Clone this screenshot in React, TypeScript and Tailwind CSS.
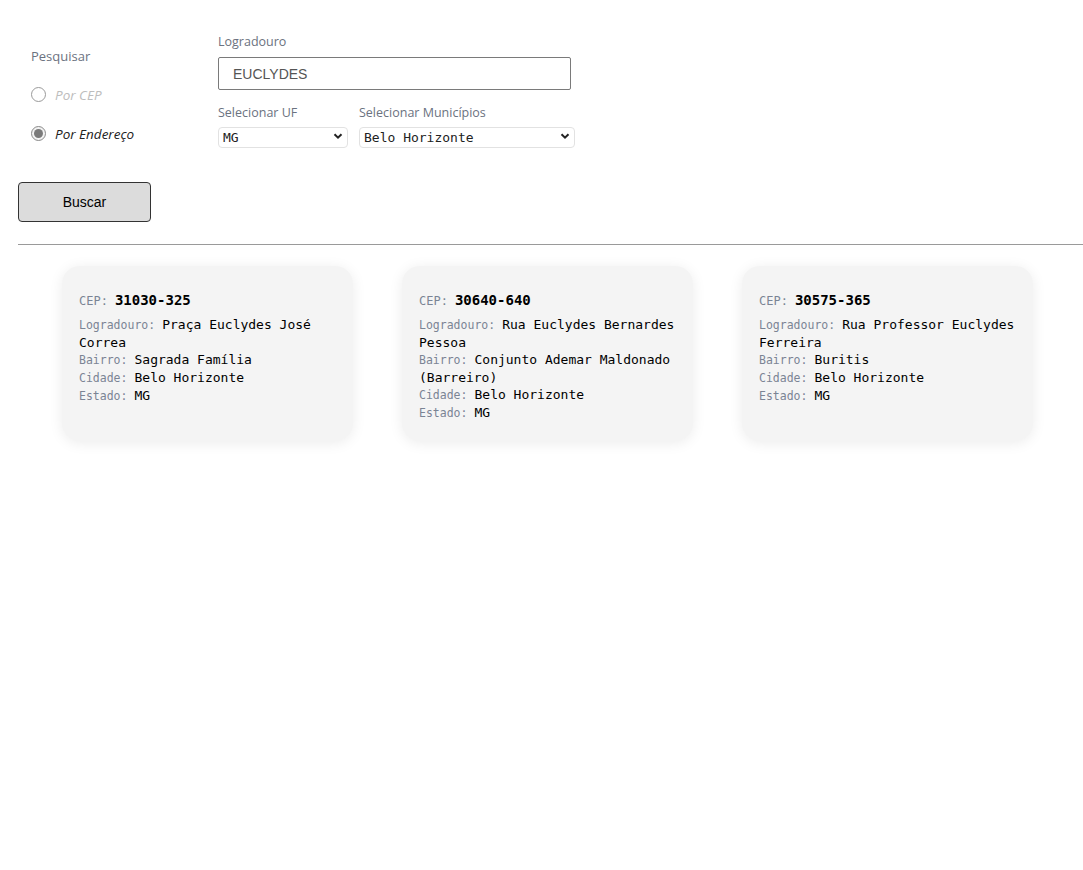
import { useState } from "react";

type Endereco = {
  cep: string;
  logradouro: string;
  bairro: string;
  cidade: string;
  estado: string;
};

const resultados: Endereco[] = [
  { cep: "31030-325", logradouro: "Praça Euclydes José Correa", bairro: "Sagrada Família", cidade: "Belo Horizonte", estado: "MG" },
  { cep: "30640-640", logradouro: "Rua Euclydes Bernardes Pessoa", bairro: "Conjunto Ademar Maldonado (Barreiro)", cidade: "Belo Horizonte", estado: "MG" },
  { cep: "30575-365", logradouro: "Rua Professor Euclydes Ferreira", bairro: "Buritis", cidade: "Belo Horizonte", estado: "MG" },
];

const sans = "font-['Open_Sans','Noto_Sans',sans-serif]";
const mono = "font-['DejaVu_Sans_Mono','Liberation_Mono',monospace]";

function Radio({ checked, label, onClick }: { checked: boolean; label: string; onClick: () => void }) {
  return (
    <label className="flex items-center gap-[9px] cursor-pointer" onClick={onClick}>
      <span
        className={`w-[15px] h-[15px] rounded-full border flex items-center justify-center ${
          checked ? "border-[#8a8a8a] bg-[#f2f2f2]" : "border-[#9a9a9a] bg-white"
        }`}
      >
        {checked && <span className="w-[9px] h-[9px] rounded-full bg-[#7a7a7a]" />}
      </span>
      <span className={`italic text-[13.5px] leading-[18px] ${checked ? "text-[#222]" : "text-[#bdbdbd]"}`}>{label}</span>
    </label>
  );
}

function Chevron() {
  return (
    <svg className="w-[10px] h-[10px] pointer-events-none absolute right-[5px] top-1/2 -translate-y-1/2" viewBox="0 0 10 10">
      <path d="M1.5 3.2 5 6.7 8.5 3.2" fill="none" stroke="#222" strokeWidth={2} />
    </svg>
  );
}

function Linha({ rotulo, valor }: { rotulo: string; valor: string }) {
  return (
    <div className="leading-[17px]">
      <span className="text-[11.5px] leading-[17px] text-[#7b8494] mr-[7px]">{rotulo}:</span>
      <span>{valor}</span>
    </div>
  );
}

function Card({ e }: { e: Endereco }) {
  return (
    <div className={`w-[291px] h-[175px] rounded-[18px] bg-[#f4f4f4] shadow-[0_2px_14px_rgba(0,0,0,0.08)] pl-[17px] pr-[12px] pt-[24px] ${mono}`}>
      <div className="mb-[5px] leading-[20px]">
        <span className="text-[12px] text-[#7b8494] mr-[7px]">CEP:</span>
        <span className="text-[14px] font-bold text-black">{e.cep}</span>
      </div>
      <div className="text-[13px] leading-[17px] text-black">
        <Linha rotulo="Logradouro" valor={e.logradouro} />
        <Linha rotulo="Bairro" valor={e.bairro} />
        <Linha rotulo="Cidade" valor={e.cidade} />
        <Linha rotulo="Estado" valor={e.estado} />
      </div>
    </div>
  );
}

export default function App() {
  const [modo, setModo] = useState<"cep" | "endereco">("endereco");

  return (
    <div className={`min-h-[870px] bg-white pl-[18px] pt-[33px] ${sans}`}>
      {/* Formulário */}
      <div className="flex">
        <div className="w-[200px] pl-[13px] pt-[14px]">
          <div className="text-[13px] text-[#6b7280] mb-[19px]">Pesquisar</div>
          <div className="flex flex-col gap-[21px]">
            <Radio checked={modo === "cep"} label="Por CEP" onClick={() => setModo("cep")} />
            <Radio checked={modo === "endereco"} label="Por Endereço" onClick={() => setModo("endereco")} />
          </div>
        </div>

        <div className="flex flex-col">
          <label className="text-[12.5px] text-[#6b7280] leading-[18px]">Logradouro</label>
          <input
            defaultValue="EUCLYDES"
            className="mt-[6px] w-[353px] h-[33px] border border-[#7a7a7a] rounded-[2px] pl-[14px] text-[14px] text-[#555] font-['Liberation_Sans',Arial,sans-serif] outline-none"
          />
          <div className="flex gap-[11px] mt-[14px]">
            <div className="flex flex-col">
              <label className="text-[12.5px] text-[#6b7280] leading-[18px] mb-[2px]">Selecionar UF</label>
              <div className="relative w-[130px]">
                <select className={`appearance-none w-full h-[21px] border border-[#e2e2e2] rounded-[4px] bg-white pl-[4px] text-[13px] text-[#222] ${mono}`}>
                  <option>MG</option>
                </select>
                <Chevron />
              </div>
            </div>
            <div className="flex flex-col">
              <label className="text-[12.5px] text-[#6b7280] leading-[18px] mb-[2px]">Selecionar Municípios</label>
              <div className="relative w-[216px]">
                <select className={`appearance-none w-full h-[21px] border border-[#e2e2e2] rounded-[4px] bg-white pl-[4px] text-[13px] text-[#222] ${mono}`}>
                  <option>Belo Horizonte</option>
                </select>
                <Chevron />
              </div>
            </div>
          </div>
        </div>
      </div>

      <button className="mt-[34px] w-[133px] h-[40px] bg-[#dcdcdc] border border-[#333] rounded-[4px] text-[14px] text-black font-['Liberation_Sans',Arial,sans-serif]">
        Buscar
      </button>

      <hr className="mt-[22px] border-0 border-t-[1.5px] border-[#9a9a9a]" />

      {/* Resultados */}
      <div className="flex gap-[49px] pl-[44px] mt-[21px]">
        {resultados.map((e) => (
          <Card key={e.cep} e={e} />
        ))}
      </div>
    </div>
  );
}
